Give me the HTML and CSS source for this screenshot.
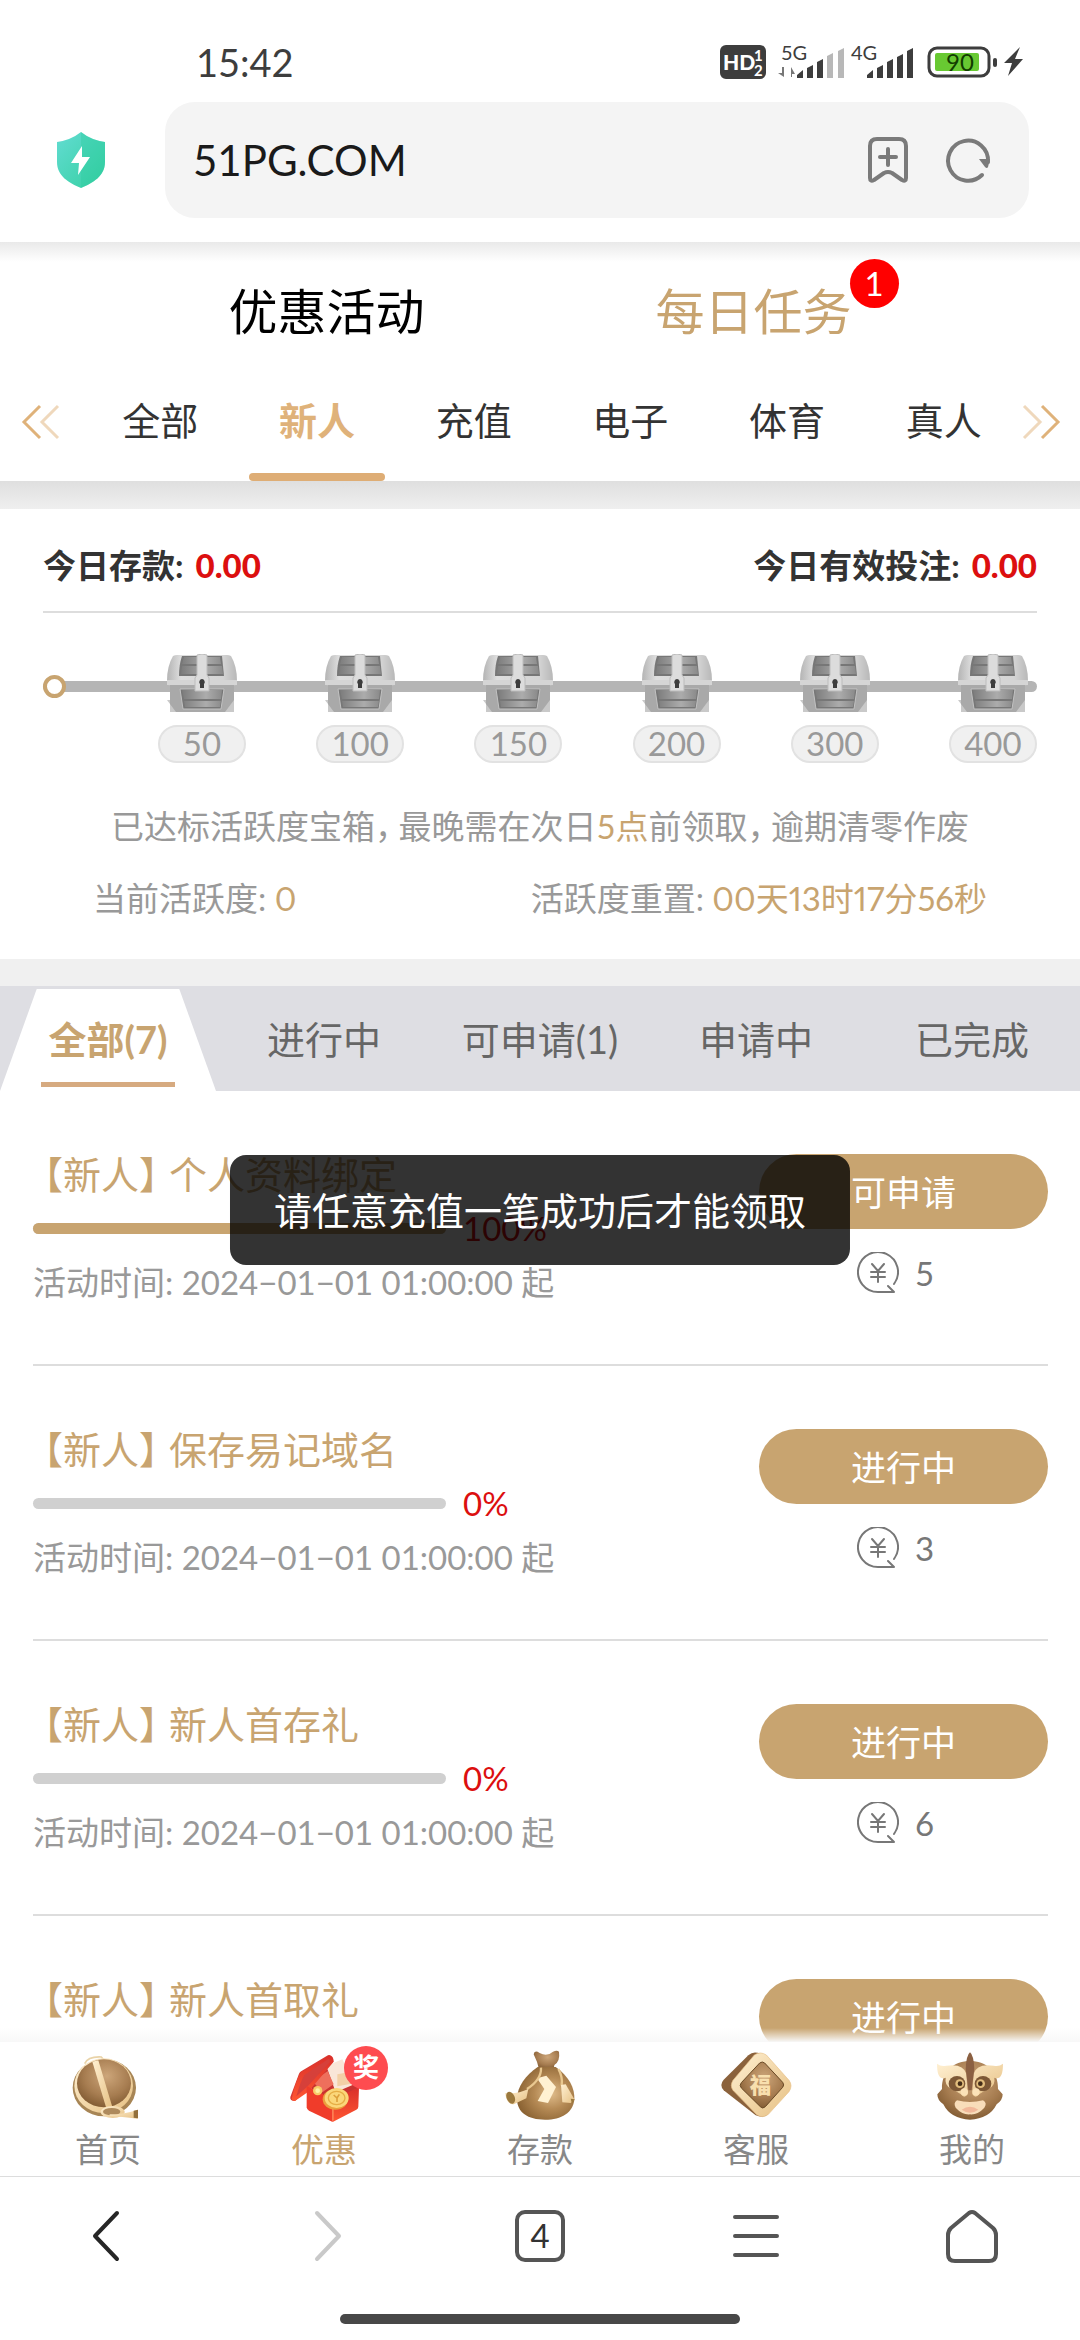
FILE: index.html
```html
<!DOCTYPE html>
<html lang="zh-CN">
<head>
  <meta charset="utf-8">
  <meta name="viewport" content="width=device-width">
  <title>每日任务</title>
  <link rel="stylesheet" href="styles.css">
</head>
<body>
  <!-- shared symbols and gradients -->
  <svg class="defs" aria-hidden="true">
    <defs>
      <linearGradient id="metal" x1="0" x2="1">
        <stop offset="0" stop-color="#b4b4b4"/><stop offset=".2" stop-color="#dedede"/>
        <stop offset=".8" stop-color="#d4d4d4"/><stop offset="1" stop-color="#b8b8b8"/>
      </linearGradient>
      <linearGradient id="plank" x1="0" x2="1">
        <stop offset="0" stop-color="#7c7c7c"/><stop offset=".6" stop-color="#acacac"/><stop offset="1" stop-color="#8a8a8a"/>
      </linearGradient>
      <linearGradient id="shield" x1="0" y1="0" x2="1" y2="1">
        <stop offset="0" stop-color="#62dcd2"/><stop offset="1" stop-color="#35cfa0"/>
      </linearGradient>
      <radialGradient id="bronze" cx=".55" cy=".35" r=".7">
        <stop offset="0" stop-color="#cda67a"/><stop offset=".6" stop-color="#a67c50"/><stop offset="1" stop-color="#7d572f"/>
      </radialGradient>
      <radialGradient id="bag" cx=".6" cy=".5" r=".6">
        <stop offset="0" stop-color="#e0bd8c"/><stop offset=".5" stop-color="#b58a55"/><stop offset="1" stop-color="#8c6434"/>
      </radialGradient>
      <linearGradient id="cream" x1="0" y1="0" x2="1" y2="1">
        <stop offset="0" stop-color="#fff0d2"/><stop offset="1" stop-color="#e6c083"/>
      </linearGradient>
      <linearGradient id="red" x1="0" y1="0" x2="0" y2="1">
        <stop offset="0" stop-color="#d92f2a"/><stop offset="1" stop-color="#ff5631"/>
      </linearGradient>
      <symbol id="chest" viewBox="0 0 70 58">
        <path d="M6 2q2-1 4-1h50q2 0 4 1 6 10 6 25v4l-3 1v26H3V32l-3-1v-4Q0 12 6 2z" fill="url(#metal)"/>
        <path d="M3 31h64v27H3z" fill="#a9a9a9"/>
        <path d="M15 2h40l2 20H12q0-11 3-20z" fill="#777"/>
        <path d="M17 3h36l1 7H15zM15 12h40l1 8H14z" fill="url(#plank)"/>
        <path d="M0 26h70v5H0z" fill="#d5d5d5"/>
        <path d="M13 35h44l-3 20H16z" fill="#777" stroke="#c2c2c2"/>
        <path d="M15 36h40l-1 9H17zM17 47h37l-1 6H18z" fill="url(#plank)"/>
        <path d="M0 46l9 12H3V46zM67 46l-9 12h9z" fill="#c9c9c9"/>
        <path d="M30 1q5-2 10 0v20l2 3v13H28V24l2-3z" fill="#dcdcdc" stroke="#bcbcbc"/>
        <path d="M35 25a3 3 0 0 1 2 5v4h-4v-4a3 3 0 0 1 2-5z" fill="#3c3c3c"/>
      </symbol>
      <symbol id="coin" viewBox="0 0 42 42">
        <path d="M37 32A20 20 0 1 0 21 40h16l-6-6" fill="none" stroke="#777" stroke-width="2" stroke-linejoin="round" stroke-linecap="round"/>
        <path d="M15 12l6 7 6-7M14 20h14M14 25h14M21 19v11" fill="none" stroke="#777" stroke-width="2" stroke-linecap="round"/>
      </symbol>
    </defs>
  </svg>

  <header class="browser-top">
    <div class="status">
      <span class="clock">15:42</span>
      <svg class="status-icons" width="306" height="36" viewBox="0 0 306 36">
        <rect width="46" height="34" rx="6" fill="#3d3d3d"/>
        <text x="3" y="25" font-size="21" font-weight="900" fill="#fff">HD</text>
        <text x="34" y="16" font-size="15" font-weight="700" fill="#fff">1</text>
        <text x="34" y="31" font-size="15" font-weight="700" fill="#fff">2</text>
        <text x="61" y="15" font-size="20" fill="#3d3d3d">5G</text>
        <path d="M58 28h4v-6h2v10zM71 32V22l4 7h-3v3z" fill="#777"/>
        <g fill="#3d3d3d">
          <path d="M77 33v-3l6-5v8zM87 33V23l6-3v13zM97 33V17l6-3v19z"/>
          <path d="M147 33v-3l6-5v8zM157 33V23l6-3v13zM167 33V17l6-3v19zM177 33V12l6-3v24zM187 33V6l6-3v30z"/>
        </g>
        <path d="M107 33V11l6-3v25zM118 33V6l6-3v30z" fill="#b8b8b8"/>
        <text x="131" y="15" font-size="20" fill="#3d3d3d">4G</text>
        <rect x="209" y="3" width="60" height="28" rx="8" fill="#fff" stroke="#3d3d3d" stroke-width="3"/>
        <rect x="215" y="8" width="44" height="18" rx="2" fill="#68c932"/>
        <text x="226" y="26" font-size="24" fill="#123d00">90</text>
        <rect x="273" y="13" width="4" height="9" rx="2" fill="#3d3d3d"/>
        <path d="M300 2l-16 16h8l-4 13 15-17h-8z" fill="#3d3d3d"/>
      </svg>
    </div>
    <div class="address">
      <svg class="shield" width="50" height="56" viewBox="0 0 50 56">
        <path d="M25 0q10 8 24 10v20c0 14-12 21-24 26C13 51 1 44 1 30V10Q15 8 25 0z" fill="url(#shield)"/>
        <path d="M25 0q10 8 24 10v20c0 14-12 21-24 26z" fill="#2ccb9d" opacity=".35"/>
        <path d="M26 14L15 31h8l-1 12 12-18h-8z" fill="#fff"/>
      </svg>
      <div class="url-box">
        <input class="url" type="text" value="51PG.COM" aria-label="网址">
        <button class="icon-btn" type="button" aria-label="收藏">
          <svg width="42" height="46" viewBox="0 0 42 46" fill="none" stroke="#7a7a7a" stroke-width="4" stroke-linecap="round" stroke-linejoin="round">
            <path d="M10 2h22q7 0 7 7v32q0 4-4 2l-10-7q-4-2-8 0L7 43q-4 2-4-2V9q0-7 7-7z"/>
            <path d="M21 12v16M13 20h16"/>
          </svg>
        </button>
        <button class="icon-btn" type="button" aria-label="刷新">
          <svg width="44" height="44" viewBox="0 0 44 44">
            <path d="M35 37A20 20 0 1 1 41 24" fill="none" stroke="#7a7a7a" stroke-width="4" stroke-linecap="round"/>
            <path d="M32 21h11l-2 8q-1 2-3 0z" fill="#7a7a7a"/>
          </svg>
        </button>
      </div>
    </div>
  </header>

  <main class="page">
    <nav class="sections">
      <a class="section" href="#promo">优惠活动</a>
      <a class="section current" href="#daily">每日任务<span class="count">1</span></a>
    </nav>
    <nav class="categories">
      <svg class="more" width="38" height="34" viewBox="0 0 38 34" fill="none" stroke-width="3" stroke="#dfb27a">
        <path d="M18 1L2 17l16 16"/><path d="M36 1L20 17l16 16" opacity=".5"/>
      </svg>
      <button class="category" type="button">全部</button>
      <button class="category current" type="button">新人</button>
      <button class="category" type="button">充值</button>
      <button class="category" type="button">电子</button>
      <button class="category" type="button">体育</button>
      <button class="category" type="button">真人</button>
      <svg class="more right" width="38" height="34" viewBox="0 0 38 34" fill="none" stroke-width="3" stroke="#dfb27a">
        <path d="M2 1l16 16L2 33" opacity=".5"/><path d="M20 1l16 16-16 16"/>
      </svg>
    </nav>

    <section class="activity">
      <div class="totals">
        <span>今日存款: <b>0.00</b></span>
        <span>今日有效投注: <b>0.00</b></span>
      </div>
      <ol class="milestones">
        <li><svg class="chest"><use href="#chest"/></svg><span class="points">50</span></li>
        <li><svg class="chest"><use href="#chest"/></svg><span class="points">100</span></li>
        <li><svg class="chest"><use href="#chest"/></svg><span class="points">150</span></li>
        <li><svg class="chest"><use href="#chest"/></svg><span class="points">200</span></li>
        <li><svg class="chest"><use href="#chest"/></svg><span class="points">300</span></li>
        <li><svg class="chest"><use href="#chest"/></svg><span class="points">400</span></li>
      </ol>
      <p class="notice">已达标活跃度宝箱<span class="comma">，</span>最晚需在次日<em>5点</em>前领取<span class="comma">，</span>逾期清零作废</p>
      <div class="reset">
        <span>当前活跃度: <em>0</em></span>
        <span>活跃度重置: <em>00天13时17分56秒</em></span>
      </div>
    </section>

    <nav class="filters">
      <button class="filter current" type="button"><span>全部(7)</span></button>
      <button class="filter" type="button">进行中</button>
      <button class="filter" type="button">可申请(1)</button>
      <button class="filter" type="button">申请中</button>
      <button class="filter" type="button">已完成</button>
    </nav>

    <ul class="tasks">
      <li class="task">
        <div class="info">
          <h2 class="name"><span class="tag">【新人】</span>个人资料绑定</h2>
          <div class="progress"><div class="bar"><div class="fill" style="width: 100%"></div></div><span>100%</span></div>
          <p class="time">活动时间: 2024−01−01 01:00:00 起</p>
        </div>
        <div class="action">
          <button class="apply" type="button">可申请</button>
          <span class="reward"><svg width="42" height="42"><use href="#coin"/></svg>5</span>
        </div>
      </li>
      <li class="task">
        <div class="info">
          <h2 class="name"><span class="tag">【新人】</span>保存易记域名</h2>
          <div class="progress"><div class="bar"><div class="fill" style="width: 0%"></div></div><span>0%</span></div>
          <p class="time">活动时间: 2024−01−01 01:00:00 起</p>
        </div>
        <div class="action">
          <button class="apply" type="button">进行中</button>
          <span class="reward"><svg width="42" height="42"><use href="#coin"/></svg>3</span>
        </div>
      </li>
      <li class="task">
        <div class="info">
          <h2 class="name"><span class="tag">【新人】</span>新人首存礼</h2>
          <div class="progress"><div class="bar"><div class="fill" style="width: 0%"></div></div><span>0%</span></div>
          <p class="time">活动时间: 2024−01−01 01:00:00 起</p>
        </div>
        <div class="action">
          <button class="apply" type="button">进行中</button>
          <span class="reward"><svg width="42" height="42"><use href="#coin"/></svg>6</span>
        </div>
      </li>
      <li class="task">
        <div class="info">
          <h2 class="name"><span class="tag">【新人】</span>新人首取礼</h2>
        </div>
        <div class="action">
          <button class="apply" type="button">进行中</button>
        </div>
      </li>
    </ul>

    <nav class="tabbar">
      <a href="#home">
        <svg width="70" height="70" viewBox="0 0 210 210">
          <path d="M35 38q10-22 50-20l8 10" fill="none" stroke="#e9d3a8" stroke-width="5"/>
          <ellipse cx="94" cy="110" rx="95" ry="86" fill="#a78555"/>
          <ellipse cx="92" cy="104" rx="88" ry="82" fill="url(#cream)"/>
          <ellipse cx="93" cy="97" rx="81" ry="72" fill="url(#bronze)"/>
          <path d="M58 32l18-4 42 140-18 4z" fill="url(#cream)"/>
          <ellipse cx="119" cy="183" rx="36" ry="18" fill="url(#cream)"/>
          <ellipse cx="116" cy="182" rx="26" ry="11" fill="#ae8a5c"/>
          <path d="M110 190q45 0 84-14v27q-50-6-84-8z" fill="url(#cream)"/>
          <path d="M182 179l13-3v26l-13-2z" fill="#93703c"/>
        </svg>
        首页
      </a>
      <a class="current" href="#promo">
        <svg width="70" height="70" viewBox="0 0 210 210">
          <path d="M53 105l30-60 60-5 67 70-77 40z" fill="#c93230"/>
          <path d="M112 45l48-20 36 75-56 24z" fill="#f9e6d8"/>
          <path d="M145 70l42-8v36l-42 8z" fill="#f3d0a6"/>
          <path d="M72 92l44-32 18 40-34 24z" fill="#ee6f5c"/>
          <path d="M118 12q14 4 15 20L54 114 18 150q-16 0-14-12L30 68q2-6 9-9z" fill="#d83a33"/>
          <path d="M122 12q12 4 12 20L58 122 18 150q-8 0-10-6 14-62 28-80 3-4 8-4z" fill="url(#red)"/>
          <path d="M118 24q6 0 4 10L56 106l-34 30q12-44 24-64z" fill="#d6403a"/>
          <path d="M53 105l78 40v68l-71-34q-7-4-7-10z" fill="#f03c2a"/>
          <path d="M131 145l79-36-2 58q0 6-6 9l-71 37z" fill="url(#red)"/>
          <path d="M132 150v58" stroke="#ff8754" stroke-width="4"/>
          <circle cx="86" cy="119" r="14" fill="#f7cb68"/><circle cx="86" cy="119" r="7" fill="#fff0a5"/>
          <ellipse cx="139" cy="145" rx="38" ry="31" fill="#ea9e3d"/>
          <ellipse cx="143" cy="141" rx="36" ry="30" fill="#fbd77a"/>
          <ellipse cx="143" cy="141" rx="25" ry="20" fill="none" stroke="#e6ad44" stroke-width="4"/>
          <path d="M134 132l10 9 7-11M144 141v12" fill="none" stroke="#dda03c" stroke-width="5"/>
        </svg>
        <span class="prize">奖</span>
        优惠
      </a>
      <a href="#deposit">
        <svg width="70" height="70" viewBox="0 0 210 210">
          <path d="M86 10q2-14 18-4 22 12 40-4 12-6 18 0 4 28-14 40l-2 12h-44q-4-20-16-44z" fill="url(#bronze)"/>
          <path d="M98 48h54c40 28 58 64 56 98-4 38-38 60-88 60-52 0-84-22-84-62 0-36 26-72 62-96z" fill="url(#bag)"/>
          <path d="M96 82l28-8 29 34-24 48-31-6 20-36z" fill="#fff1d2"/>
          <path d="M108 50q2 36-42 64M160 54q14 24 10 50" fill="none" stroke="#e9c890" stroke-width="7"/>
          <path d="M70 114l-6 28-38 18q-20 2-26-34 38 4 70-12z" fill="url(#cream)"/>
          <ellipse cx="17" cy="140" rx="12" ry="19" fill="#9b793e" transform="rotate(-24 17 140)"/>
          <path d="M168 102l14-2 27 46-12 10-25-2z" fill="url(#cream)"/>
          <path d="M197 143l12 2-8 14z" fill="#9b793e"/>
        </svg>
        存款
      </a>
      <a href="#service">
        <svg width="70" height="70" viewBox="0 0 210 210">
          <path d="M82 13q16-14 36-4l24 180q-14 14-38 4L8 118q-14-16 0-32z" fill="#8b623c"/>
          <path d="M100 12q18-12 36 0l68 76q12 16 0 34l-62 68q-18 14-36 0L36 118q-10-14 0-30z" fill="url(#cream)" stroke="#e8c18a" stroke-width="2"/>
          <path d="M116 36q8-6 15 0l54 58q6 8 0 15l-52 58q-8 8-15 0l-57-56q-7-8 0-16z" fill="url(#bronze)" stroke="#694925" stroke-width="3"/>
          <text x="86" y="125" font-size="64" font-weight="900" fill="#f8dfae">福</text>
        </svg>
        客服
      </a>
      <a href="#mine">
        <svg width="70" height="70" viewBox="0 0 210 210">
          <path d="M99 30c46 0 86 30 84 84l14 16q0 18-18 30-22 44-80 46-58-2-80-46-18-12-18-30l14-16C13 60 53 30 99 30z" fill="url(#bronze)"/>
          <path d="M0 38q12 10 28 6 50-8 60 24l4 62q-10 14-20 0l-30-18q-20-8-16-32-26 10-26-42zM198 38q-12 10-28 6-50-8-60 24l-4 62q10 14 20 0l30-18q20-8 16-32 26 10 26-42z" fill="url(#cream)"/>
          <path d="M86 54q2-42 13-50 11 8 13 50l-8 64H94z" fill="#8b6042"/>
          <ellipse cx="60" cy="98" rx="25" ry="23" fill="#7d5836"/><ellipse cx="138" cy="98" rx="25" ry="23" fill="#7d5836"/>
          <circle cx="68" cy="98" r="13" fill="#e2bd7d"/><circle cx="131" cy="98" r="13" fill="#e2bd7d"/>
          <circle cx="69" cy="98" r="7" fill="#442d18"/><circle cx="130" cy="98" r="7" fill="#442d18"/>
          <circle cx="82" cy="123" r="11" fill="#fbe2b8"/><circle cx="117" cy="123" r="11" fill="#fbe2b8"/>
          <path d="M60 148q39 10 78 0 14 8 4 22-20 22-43 20-23 2-43-20-8-14 4-22z" fill="#f8ddba"/>
          <path d="M74 176q25-18 50 0-25 18-50 0z" fill="#f1b89a"/>
        </svg>
        我的
      </a>
    </nav>

    <div class="toast" role="status">请任意充值一笔成功后才能领取</div>
  </main>

  <footer class="browser-bottom">
    <div class="browser-nav">
      <button type="button" aria-label="后退">
        <svg width="54" height="54" viewBox="0 0 54 54"><path d="M36 4L14 27l22 23" stroke="#262626"/></svg>
      </button>
      <button type="button" aria-label="前进">
        <svg width="54" height="54" viewBox="0 0 54 54"><path d="M20 4l22 23-22 23" stroke="#c9c9c9"/></svg>
      </button>
      <button type="button"><span class="tab-count">4</span></button>
      <button type="button" aria-label="菜单">
        <svg width="54" height="54" viewBox="0 0 54 54"><path d="M6 8h42M6 27h42M6 46h42" stroke="#555"/></svg>
      </button>
      <button type="button" aria-label="主页">
        <svg width="54" height="54" viewBox="0 0 54 54"><path d="M24 4q3-2 6 0l18 15q3 3 3 7v19q0 7-7 7H10q-7 0-7-7V26q0-4 3-7z" stroke="#555"/></svg>
      </button>
    </div>
    <div class="gesture"></div>
  </footer>
</body>
</html>
```
FILE: styles.css
```css
*, *:before, *:after { box-sizing: border-box; }
html, body { height: 100%; }
body {
  margin: 0;
  display: flex;
  flex-direction: column;
  overflow: hidden;
  background: #fff;
  color: #333;
  font-family: Lato, "Noto Sans CJK SC", sans-serif;
  font-size: 33px;
  line-height: 40px;
}
button, input {
  margin: 0;
  padding: 0;
  border: 0;
  background: none;
  color: inherit;
  font: inherit;
}
a { color: inherit; text-decoration: none; }
em { color: #c8a470; font-style: normal; }
ul, ol { margin: 0; padding: 0; list-style: none; }
svg { display: block; overflow: visible; }
.defs { position: absolute; width: 0; height: 0; }

/* browser chrome */
.browser-top { flex: none; padding-bottom: 24px; }
.status {
  display: flex;
  justify-content: space-between;
  padding: 41px 54px 19px 196px;
}
.clock { font-size: 38px; line-height: 42px; color: #3d3d3d; }
.status-icons { margin-top: 4px; }
.address {
  display: flex;
  align-items: center;
  gap: 59px;
  padding: 0 51px 0 56px;
}
.shield { flex: none; }
.url-box {
  flex: 1;
  display: flex;
  align-items: center;
  gap: 38px;
  height: 116px;
  padding: 0 38px 0 28px;
  border-radius: 30px;
  background: #f4f4f4;
}
.url { flex: 1; min-width: 0; color: #1a1a1a; font-size: 42px; line-height: 50px; }
.icon-btn { flex: none; }

/* page */
.page {
  position: relative;
  flex: 1;
  min-height: 0;
  display: flex;
  flex-direction: column;
}
.sections {
  display: flex;
  padding: 39px 113px 21px;
  background: linear-gradient(#e9e9e9, #fff 20px);
  font-size: 49px;
  line-height: 60px;
}
.section { flex: 1; text-align: center; color: #000; }
.section.current { position: relative; color: #c8a470; }
.count {
  position: absolute;
  top: -22px;
  left: calc(50% + 96px);
  width: 49px;
  height: 49px;
  border-radius: 50%;
  background: #f00;
  color: #fff;
  font-size: 33px;
  line-height: 48px;
}
.categories {
  display: flex;
  align-items: center;
  padding: 0 20px 0 22px;
}
.more { flex: none; margin-right: 22px; }
.more.right { margin: 0; }
.category {
  position: relative;
  flex: 1;
  height: 119px;
  padding-bottom: 3px;
  font-size: 38px;
}
.category.current { color: #dfb27a; font-weight: 700; }
.category.current:after {
  content: "";
  position: absolute;
  left: 10px;
  right: 10px;
  bottom: 0;
  height: 8px;
  border-radius: 4px;
  background: #dead75;
}

/* activity panel */
.activity {
  padding: 28px 43px 41px;
  border-bottom: 27px solid #f0f0f0;
  background: linear-gradient(#dfdfdf, #efefef 28px, #fff 28px);
}
.totals {
  display: flex;
  justify-content: space-between;
  padding: 36px 0 26px;
  border-bottom: 2px solid #ddd;
  font-weight: 700;
}
.totals b { margin-left: 4px; color: #dc0f0f; }
.milestones {
  position: relative;
  display: flex;
  justify-content: space-between;
  padding: 41px 0 0 115px;
}
/* track and its starting ring */
.milestones:before {
  content: "";
  position: absolute;
  top: 68px;
  left: 0;
  right: 0;
  height: 11px;
  border-radius: 6px;
  background: #b5b5b5;
}
.milestones:after {
  content: "";
  position: absolute;
  top: 62px;
  left: 0;
  width: 23px;
  height: 23px;
  border: 4px solid #c8a470;
  border-radius: 50%;
  background: #fff;
}
.milestones li { position: relative; width: 88px; }
.chest { width: 70px; height: 58px; margin: 0 auto 13px; }
.points {
  display: block;
  height: 38px;
  border: 2px solid #e2e2e2;
  border-radius: 19px;
  background: #f0f0f0;
  color: #999;
  font-size: 33px;
  line-height: 32px;
  text-align: center;
}
.notice { margin: 43px 0 32px; color: #999; text-align: center; white-space: nowrap; }
.comma { margin-right: 7px; font-feature-settings: "halt"; }
.reset {
  display: flex;
  justify-content: space-between;
  padding: 0 50px 0 50px;
  color: #999;
  font-variant-numeric: proportional-nums;
}

/* status filters */
.filters { display: flex; background: #dedee3; }
.filter {
  flex: 1;
  height: 105px;
  color: #666;
  font-size: 38px;
}
.filter.current {
  background: #fff;
  clip-path: polygon(17% 3px, 83% 3px, 100% 100%, 0 100%);
  color: #c8a470;
  font-weight: 700;
}
.filter.current span {
  display: block;
  margin: 0 41px;
  padding: 28px 0 23px;
  border-bottom: 5px solid #d6aa80;
  white-space: nowrap;
}

/* task list */
.tasks {
  flex: 1;
  min-height: 0;
  overflow: hidden;
  padding: 0 32px 0 33px;
}
.task {
  display: flex;
  justify-content: space-between;
  height: 275px;
  padding-top: 63px;
  border-bottom: 2px solid #ddd;
}
.name {
  margin: 0;
  padding-left: 11px;
  color: #c8a470;
  font-size: 38px;
  font-weight: 400;
  line-height: 40px;
}
.tag { margin-right: 11px; font-feature-settings: "halt"; }
.progress {
  display: flex;
  align-items: center;
  gap: 17px;
  margin: 14px 0;
  color: #dc0f0f;
}
.bar { width: 413px; height: 11px; border-radius: 6px; background: #d0d0d0; }
.fill { height: 100%; border-radius: 6px; background: #c8a470; }
.time { margin: 0; color: #999; }
.action { display: flex; flex-direction: column; align-items: center; gap: 23px; }
.apply {
  width: 289px;
  height: 75px;
  border-radius: 38px;
  background: #c8a470;
  color: #fff;
  font-size: 35px;
}
.reward {
  display: flex;
  align-items: center;
  gap: 16px;
  padding-right: 16px;
  color: #777;
}

/* site tab bar */
.tabbar {
  position: relative;
  display: flex;
  border-bottom: 1px solid #ddd;
  background: #fff;
  color: #888;
}
.tabbar:before {
  content: "";
  position: absolute;
  left: 0;
  right: 0;
  bottom: 100%;
  height: 14px;
  background: linear-gradient(rgba(248, 248, 248, 0), #f8f8f8);
}
.tabbar a {
  position: relative;
  flex: 1;
  padding: 9px 0 7px;
  text-align: center;
}
.tabbar a.current { color: #c8a470; }
.tabbar svg { margin: 0 auto 8px; }
.prize {
  position: absolute;
  top: 4px;
  left: calc(50% + 20px);
  width: 44px;
  height: 44px;
  border-radius: 50%;
  background: #fe4c50;
  color: #fff;
  font-size: 26px;
  font-weight: 700;
  line-height: 42px;
}

.toast {
  position: absolute;
  top: 50%;
  left: 50%;
  transform: translate(-50%, -50%);
  padding: 35px 44px;
  border-radius: 16px;
  background: rgba(0, 0, 0, .8);
  color: #fff;
  font-size: 38px;
  white-space: nowrap;
}

/* browser toolbar */
.browser-bottom { flex: none; padding: 32px 0 16px; }
.browser-nav { display: flex; height: 54px; margin-bottom: 51px; }
.browser-nav button { flex: 1; display: flex; justify-content: center; }
.browser-nav path { fill: none; stroke-width: 4px; stroke-linecap: round; stroke-linejoin: round; }
.tab-count {
  width: 50px;
  height: 52px;
  margin-top: 1px;
  border: 4px solid #555;
  border-radius: 10px;
  color: #333;
  line-height: 43px;
}
.gesture {
  width: 37%;
  height: 10px;
  margin: 0 auto;
  border-radius: 5px;
  background: #484848;
}
```
